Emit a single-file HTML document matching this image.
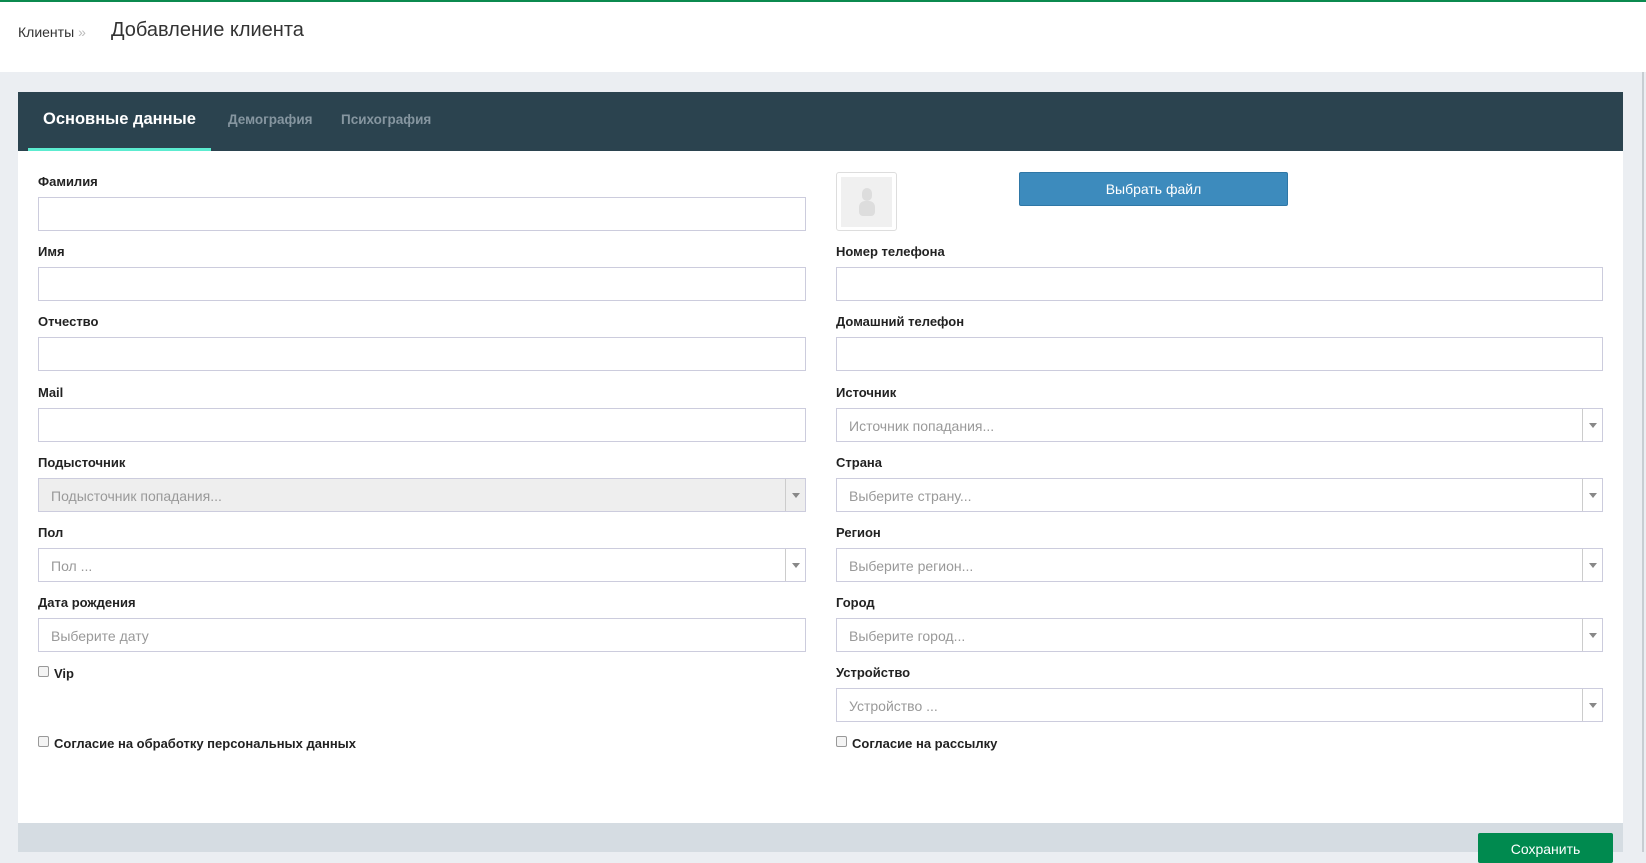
<!DOCTYPE html>
<html><head><meta charset="utf-8"><style>
*{box-sizing:border-box;margin:0;padding:0}
body{width:1646px;height:852px;overflow:hidden;background:#ebeef2;font-family:"Liberation Sans",sans-serif;position:relative;color:#222}
.top{position:absolute;left:0;top:0;width:1646px;height:72px;background:#fff;border-top:2px solid #0b8a4f}
.bc{position:absolute;left:18px;top:22px;font-size:14px;color:#333}
.bc span{color:#bbb;margin-left:4px}
.title{position:absolute;left:111px;top:17px;font-size:20px;color:#333}
.panel{position:absolute;left:18px;top:92px;width:1605px;height:760px;background:#fff}
.tabs{height:59px;background:#2b434f;position:relative}
.tab{position:absolute;top:20px;font-size:13.5px;font-weight:bold;color:#8696a0}
.tab.a{font-size:16.5px;color:#fff;top:18px;left:25px}
.ul{position:absolute;left:10px;top:56px;width:183px;height:3px;background:#5cecd0}
.lbl{position:absolute;font-size:13px;font-weight:bold;color:#222}
.inp{position:absolute;height:34px;border:1px solid #ccd;background:#fff;font-size:14px;color:#999;padding:9px 12px 0}
.sel::after{content:"";position:absolute;right:0;top:0;width:19px;height:32px;border-left:1px solid #ccc}
.sel::before{content:"";position:absolute;right:5px;top:14px;border-left:4px solid transparent;border-right:4px solid transparent;border-top:5px solid #888}
.dis{background:#eee}
.cb{position:absolute;font-size:13px;font-weight:bold}
.cb i{display:inline-block;width:11px;height:11px;border:1px solid #999;border-radius:2px;margin-right:5px;vertical-align:1px;background:#f4f4f4}
.foot{position:absolute;left:0;top:731px;width:1605px;height:29px;background:#d5dce2}
.save{position:absolute;left:1460px;top:10px;width:135px;height:30px;background:#008a4f;border-radius:2px;color:#fff;font-size:14px;text-align:center;padding-top:8px}
.sb{position:absolute;left:1642px;top:72px;width:2px;height:780px;background:#c8cdd2}
</style></head><body>
<div class="top"><div class="bc">Клиенты<span>»</span></div><div class="title">Добавление клиента</div></div>
<div class="sb"></div>
<div class="panel">
<div class="tabs"><div class="tab a">Основные данные</div><div class="tab" style="left:210px">Демография</div><div class="tab" style="left:323px">Психография</div><div class="ul"></div></div>

<div class="lbl" style="left:20px;top:82px">Фамилия</div><div class="inp" style="left:20px;top:105px;width:768px"></div>
<div class="lbl" style="left:20px;top:152px">Имя</div><div class="inp" style="left:20px;top:175px;width:768px"></div>
<div class="lbl" style="left:20px;top:222px">Отчество</div><div class="inp" style="left:20px;top:245px;width:768px"></div>
<div class="lbl" style="left:20px;top:293px">Mail</div><div class="inp" style="left:20px;top:316px;width:768px"></div>
<div class="lbl" style="left:20px;top:363px">Подысточник</div><div class="inp sel dis" style="left:20px;top:386px;width:768px">Подысточник попадания...</div>
<div class="lbl" style="left:20px;top:433px">Пол</div><div class="inp sel" style="left:20px;top:456px;width:768px">Пол ...</div>
<div class="lbl" style="left:20px;top:503px">Дата рождения</div><div class="inp" style="left:20px;top:526px;width:768px">Выберите дату</div>
<div class="cb" style="left:20px;top:574px"><i></i>Vip</div>
<div class="cb" style="left:20px;top:644px"><i></i>Согласие на обработку персональных данных</div>

<div style="position:absolute;left:818px;top:80px;width:61px;height:59px;border:1px solid #ddd;border-radius:3px;padding:4px"><div style="width:51px;height:50px;background:#f0f0f0;position:relative"><div style="position:absolute;left:21px;top:11px;width:10px;height:13px;border-radius:5px;background:#ddd"></div><div style="position:absolute;left:18px;top:24px;width:16px;height:15px;border-radius:6px 6px 4px 4px;background:#ddd"></div></div></div>
<div style="position:absolute;left:1001px;top:80px;width:269px;height:34px;background:#3d8bbd;border:1px solid #2f77a6;border-radius:2px;color:#fff;font-size:14px;text-align:center;padding-top:8px">Выбрать файл</div>

<div class="lbl" style="left:818px;top:152px">Номер телефона</div><div class="inp" style="left:818px;top:175px;width:767px"></div>
<div class="lbl" style="left:818px;top:222px">Домашний телефон</div><div class="inp" style="left:818px;top:245px;width:767px"></div>
<div class="lbl" style="left:818px;top:293px">Источник</div><div class="inp sel" style="left:818px;top:316px;width:767px">Источник попадания...</div>
<div class="lbl" style="left:818px;top:363px">Страна</div><div class="inp sel" style="left:818px;top:386px;width:767px">Выберите страну...</div>
<div class="lbl" style="left:818px;top:433px">Регион</div><div class="inp sel" style="left:818px;top:456px;width:767px">Выберите регион...</div>
<div class="lbl" style="left:818px;top:503px">Город</div><div class="inp sel" style="left:818px;top:526px;width:767px">Выберите город...</div>
<div class="lbl" style="left:818px;top:573px">Устройство</div><div class="inp sel" style="left:818px;top:596px;width:767px">Устройство ...</div>
<div class="cb" style="left:818px;top:644px"><i></i>Согласие на рассылку</div>

<div class="foot"><div class="save">Сохранить</div></div>
</div>
</body></html>
